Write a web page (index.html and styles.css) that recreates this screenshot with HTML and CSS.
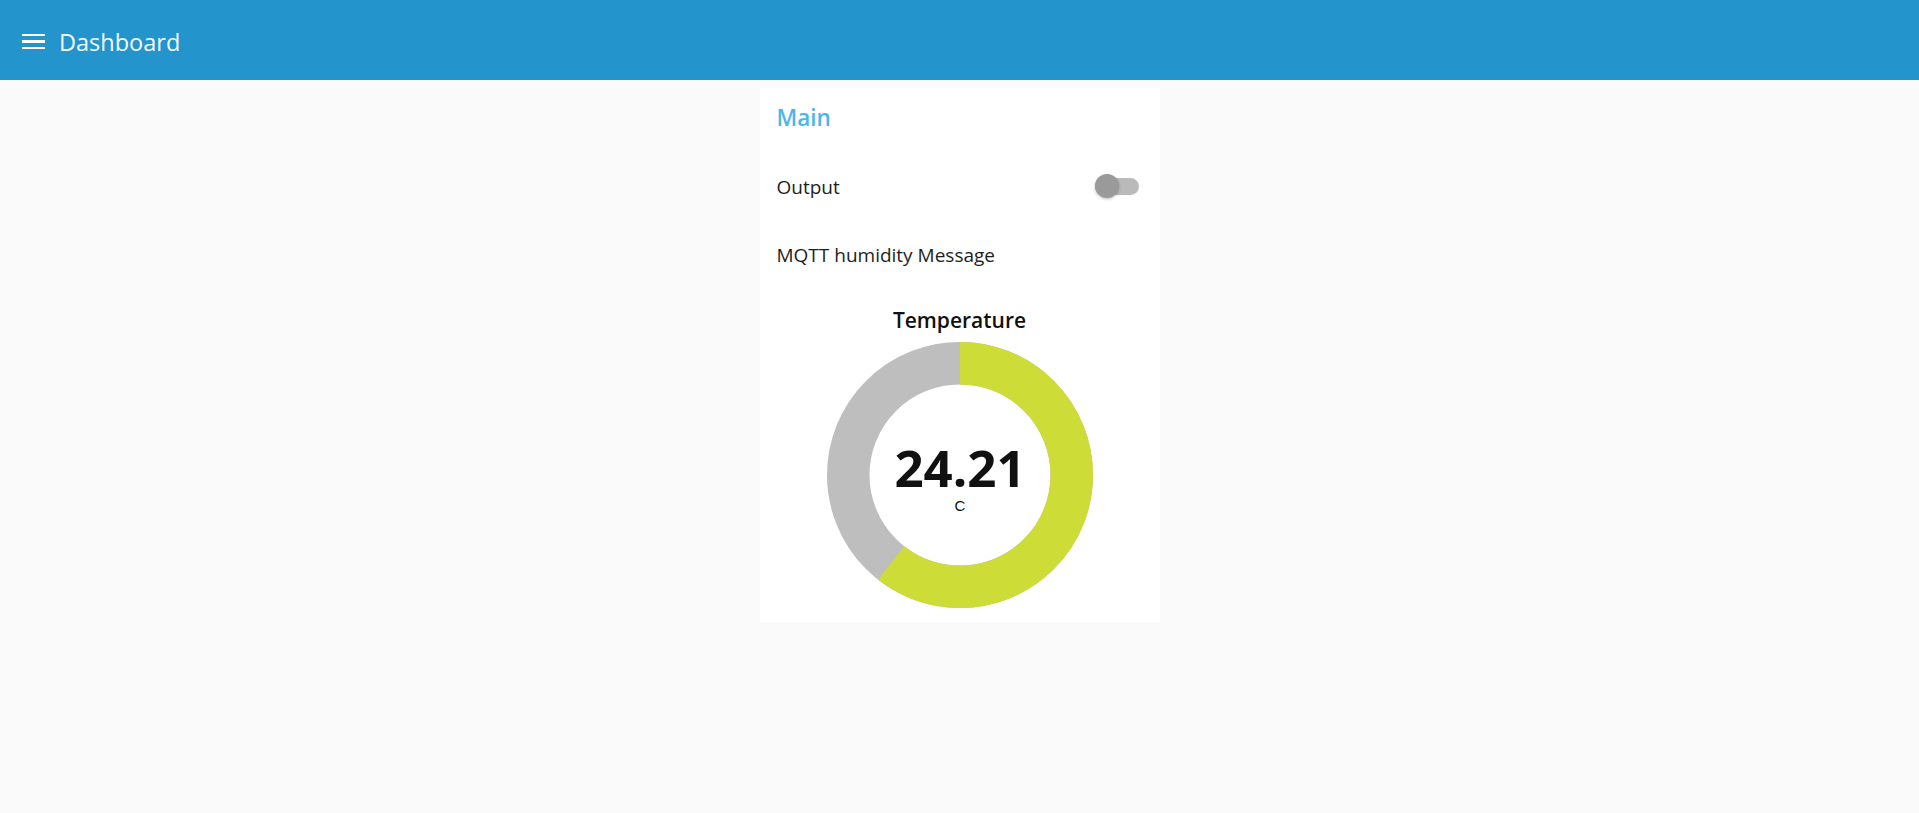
FILE: index.html
```html
<!DOCTYPE html>
<html>
<head>
<meta charset="utf-8">
<title>Dashboard</title>
<link rel="stylesheet" href="styles.css">
</head>
<body>
<header class="toolbar">
  <button class="menu-btn" aria-label="menu">
    <span class="bar"></span><span class="bar"></span><span class="bar"></span>
  </button>
  <h1 class="title">Dashboard</h1>
</header>
<main class="content">
  <section class="group">
    <h2 class="group-title">Main</h2>
    <div class="widget row">
      <span class="label">Output</span>
      <span class="switch"><span class="track"></span><span class="thumb"></span></span>
    </div>
    <div class="widget row">
      <span class="label">MQTT humidity Message</span>
    </div>
    <div class="gauge">
      <div class="gauge-title">Temperature</div>
      <svg class="donut" width="266" height="266" viewBox="0 0 266 266">
        <circle cx="133" cy="133" r="111.75" fill="none" stroke="#bebebe" stroke-width="42.5"/>
        <circle cx="133" cy="133" r="111.75" fill="none" stroke="#cddc37" stroke-width="42.5"
                stroke-dasharray="424.8 702.2" transform="rotate(-90 133 133)"/>
        <text class="gauge-value" x="133" y="144.5" text-anchor="middle">24.21</text>
        <text class="gauge-unit" x="133" y="169" text-anchor="middle">C</text>
      </svg>
    </div>
  </section>
</main>
</body>
</html>
```

FILE: styles.css
```css
* { box-sizing: border-box; }
html, body {
  margin: 0;
  padding: 0;
  background: #fafafa;
  font-family: "Open Sans", "Noto Sans", sans-serif;
}
.toolbar {
  height: 80px;
  background: #2394cc;
  display: flex;
  align-items: center;
  padding: 3px 0 0 22px;
  color: #fff;
}
.menu-btn {
  background: none;
  border: 0;
  padding: 0;
  width: 23px;
  height: 15px;
  display: flex;
  flex-direction: column;
  justify-content: space-between;
  margin-right: 14px;
}
.menu-btn .bar {
  display: block;
  height: 2.4px;
  width: 23px;
  background: #fff;
}
.title {
  margin: 0;
  font-size: 23.5px;
  font-weight: 400;
  line-height: 30px;
  color: #f4fbff;
}
.content {
  display: flex;
  justify-content: center;
  padding-top: 8px;
}
.group {
  width: 400px;
  background: #fff;
  padding: 15px 17px 14px 17px;
  display: flex;
  flex-direction: column;
}
.group-title {
  margin: 0 0 24.4px 0;
  font-size: 22.5px;
  font-weight: 600;
  line-height: 30px;
  color: #4cb6ec;
}
.widget {
  height: 60px;
  margin-bottom: 7.5px;
}
.row {
  display: flex;
  align-items: center;
  justify-content: space-between;
}
.label {
  font-size: 19px;
  color: #1e1e1e;
}
.switch {
  position: relative;
  width: 44px;
  height: 24px;
  margin-right: 4px;
  margin-top: -2px;
}
.switch .track {
  position: absolute;
  left: 0;
  top: 3.5px;
  width: 44px;
  height: 17px;
  border-radius: 9px;
  background: #bababa;
}
.switch .thumb {
  position: absolute;
  left: 0;
  top: 0;
  width: 24px;
  height: 24px;
  border-radius: 50%;
  background: #9a9a9a;
  box-shadow: 0 1px 3px rgba(0,0,0,0.25);
}
.gauge {
  display: flex;
  flex-direction: column;
  align-items: center;
  padding-top: 13.6px;
}
.gauge-title {
  font-size: 21px;
  font-weight: 600;
  line-height: 28px;
  color: #111;
  margin-bottom: 8px;
}
.donut { display: block; }
.gauge-value {
  font-family: "Open Sans", "Noto Sans", sans-serif;
  font-weight: 700;
  font-size: 51px;
  fill: #111;
}
.gauge-unit {
  font-family: "Liberation Sans", Arial, sans-serif;
  font-size: 15px;
  fill: #111;
}
```
